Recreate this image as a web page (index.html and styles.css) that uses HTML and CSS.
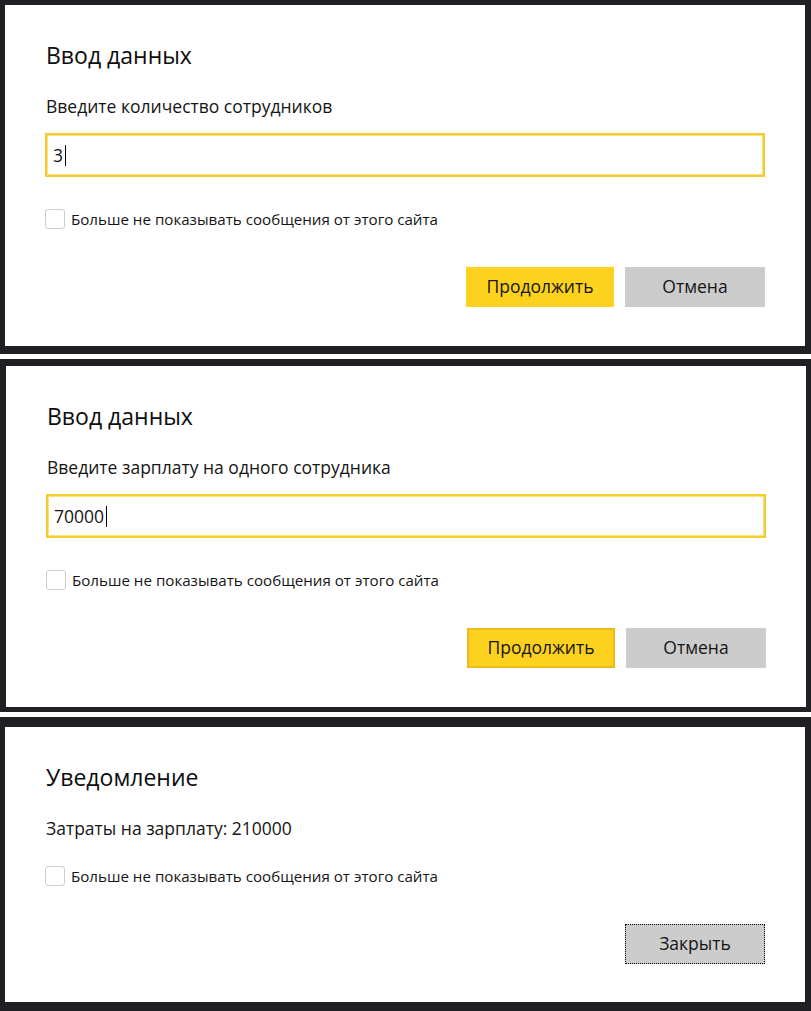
FILE: index.html
```html
<!DOCTYPE html>
<html lang="ru">
<head>
<meta charset="utf-8">
<title>Диалоги</title>
<link rel="stylesheet" href="styles.css">
</head>
<body>
<div class="stack">
  <section class="dialog dialog-a">
    <h2 class="title">Ввод данных</h2>
    <p class="message">Введите количество сотрудников</p>
    <div class="field"><span class="value">3</span><span class="caret"></span></div>
    <label class="check-row">
      <span class="checkbox"></span>
      <span class="check-label">Больше не показывать сообщения от этого сайта</span>
    </label>
    <div class="actions">
      <button class="btn btn-primary">Продолжить</button>
      <button class="btn btn-secondary">Отмена</button>
    </div>
  </section>

  <section class="dialog dialog-b">
    <h2 class="title">Ввод данных</h2>
    <p class="message">Введите зарплату на одного сотрудника</p>
    <div class="field"><span class="value">70000</span><span class="caret"></span></div>
    <label class="check-row">
      <span class="checkbox"></span>
      <span class="check-label">Больше не показывать сообщения от этого сайта</span>
    </label>
    <div class="actions">
      <button class="btn btn-primary is-focused">Продолжить</button>
      <button class="btn btn-secondary">Отмена</button>
    </div>
  </section>

  <section class="dialog dialog-c">
    <h2 class="title">Уведомление</h2>
    <p class="message">Затраты на зарплату: 210000</p>
    <label class="check-row">
      <span class="checkbox"></span>
      <span class="check-label">Больше не показывать сообщения от этого сайта</span>
    </label>
    <div class="actions">
      <button class="btn btn-secondary btn-close">Закрыть</button>
    </div>
  </section>
</div>
</body>
</html>
```

FILE: styles.css
```css
* { box-sizing: border-box; }

html, body {
  margin: 0;
  padding: 0;
  background: #ffffff;
}

body {
  font-family: "Segoe UI", "Open Sans", "Noto Sans", sans-serif;
  color: #151515;
}

.stack {
  display: flex;
  flex-direction: column;
  gap: 5px;
  width: 811px;
}

.dialog {
  background: #ffffff;
  border-style: solid;
  border-color: #1f1f24;
  padding: 34px 40px 39px 40px;
  display: flex;
  flex-direction: column;
}

.dialog-a { border-width: 5px 6px 8px 5px; }
.dialog-b { border-width: 7px 5px 5px 6px; }
.dialog-c { border-width: 10px 6px 9px 5px; padding-bottom: 38px; }

.title {
  margin: 0;
  font-size: 23px;
  line-height: 32px;
  font-weight: 400;
  color: #0d0d0d;
  padding-left: 1px;
}

.message {
  margin: 23px 0 0 0;
  font-size: 17.5px;
  line-height: 24px;
  padding-left: 1px;
}

.field {
  margin: 15px 0 6px 0;
  height: 44px;
  border: 2px solid #f3cc2f;
  box-shadow: inset 0 0 0 1px #fbe27e;
  display: flex;
  align-items: center;
  padding-left: 6px;
  font-size: 17.5px;
}

.value { line-height: 24px; }

.caret {
  display: inline-block;
  width: 1px;
  height: 21px;
  background: #000000;
  margin-left: 2px;
}

.check-row {
  margin-top: 26px;
  display: flex;
  align-items: center;
  height: 20px;
}

.checkbox {
  width: 20px;
  height: 20px;
  border: 1px solid #cdcdcd;
  border-radius: 3px;
  background: #ffffff;
  flex: none;
}

.check-label {
  margin-left: 6px;
  font-size: 15.15px;
  line-height: 20px;
}

.actions {
  margin-top: 38px;
  display: flex;
  justify-content: flex-end;
  gap: 11px;
}

.btn {
  height: 40px;
  border: 0;
  font-family: inherit;
  font-size: 17.5px;
  color: #151515;
  padding: 0 0 3px 0;
  cursor: pointer;
}

.btn-primary {
  width: 148px;
  background: #fdd21e;
}

.btn-primary.is-focused {
  border: 2px solid #f1b81c;
}

.btn-secondary {
  width: 140px;
  background: #cccccc;
}

.btn-close {
  border: 1px dotted #000000;
}
```
